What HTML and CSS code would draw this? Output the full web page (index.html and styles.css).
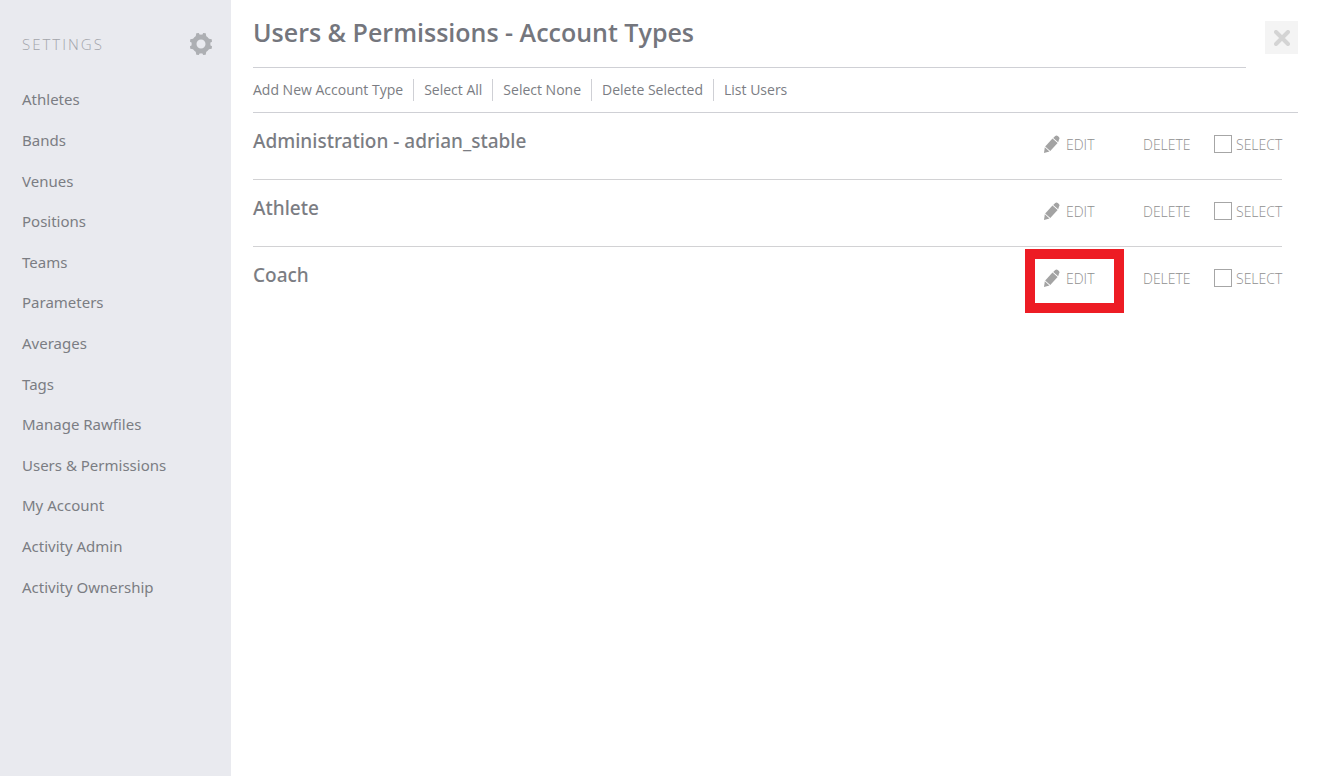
FILE: index.html
```html
<!DOCTYPE html>
<html lang="en">

<head>
    <meta charset="UTF-8">
    <meta name="viewport" content="width=device-width, initial-scale=1.0">
    <title>Users &amp; Permissions - Account Types</title>
    <link rel="stylesheet" href="styles.css">
</head>

<body>
    <!-- Icon used by every edit link -->
    <svg class="sprite" aria-hidden="true">
        <symbol id="pencil" viewBox="0 0 16 18">
            <path d="M1.2 11.600 8.500 3.400 13.600 7.900 6.300 16z" />
            <path d="M9.200 2.900 11.200 1c.8-.8 1.800-.8 2.600-.1l1.100 1c.8.8.8 1.800.1 2.600L14.200 7.200z" />
            <path d="M.8 12.300 0 17.900 5.500 16.600z" />
        </symbol>
    </svg>

    <aside class="sidebar">
        <div class="sidebar-header">
            <h2>SETTINGS</h2>
            <svg class="gear" viewBox="0 0 24 24" aria-hidden="true">
                <circle cx="12" cy="12" r="7" />
                <path d="M6.500 5.500 7.300 1.300 9.800 1 11 3.200H13L14.200 1 16.700 1.300 17.500 5.500z" />
                <path d="M6.500 5.500 7.300 1.300 9.800 1 11 3.200H13L14.200 1 16.700 1.300 17.500 5.500z" transform="rotate(90 12 12)" />
                <path d="M6.500 5.500 7.300 1.300 9.800 1 11 3.200H13L14.200 1 16.700 1.300 17.500 5.500z" transform="rotate(180 12 12)" />
                <path d="M6.500 5.500 7.300 1.300 9.800 1 11 3.200H13L14.200 1 16.700 1.300 17.500 5.500z" transform="rotate(270 12 12)" />
            </svg>
        </div>
        <nav>
            <ul class="menu">
                <li><a href="#">Athletes</a></li>
                <li><a href="#">Bands</a></li>
                <li><a href="#">Venues</a></li>
                <li><a href="#">Positions</a></li>
                <li><a href="#">Teams</a></li>
                <li><a href="#">Parameters</a></li>
                <li><a href="#">Averages</a></li>
                <li><a href="#">Tags</a></li>
                <li><a href="#">Manage Rawfiles</a></li>
                <li><a href="#">Users &amp; Permissions</a></li>
                <li><a href="#">My Account</a></li>
                <li><a href="#">Activity Admin</a></li>
                <li><a href="#">Activity Ownership</a></li>
            </ul>
        </nav>
    </aside>

    <main>
        <header class="page-header">
            <h1>Users &amp; Permissions - Account Types</h1>
            <button type="button" class="close" aria-label="Close">
                <svg viewBox="0 0 16 16" aria-hidden="true"><path d="M2 2l12 12M14 2 2 14" /></svg>
            </button>
        </header>

        <div class="toolbar">
            <a href="#">Add New Account Type</a>
            <a href="#">Select All</a>
            <a href="#">Select None</a>
            <a href="#">Delete Selected</a>
            <a href="#">List Users</a>
        </div>

        <ul class="accounts">
            <li>
                <h3>Administration - adrian_stable</h3>
                <div class="actions">
                    <a href="#" class="edit"><svg><use href="#pencil" /></svg>EDIT</a>
                    <a href="#">DELETE</a>
                    <label><input type="checkbox">SELECT</label>
                </div>
            </li>
            <li>
                <h3>Athlete</h3>
                <div class="actions">
                    <a href="#" class="edit"><svg><use href="#pencil" /></svg>EDIT</a>
                    <a href="#">DELETE</a>
                    <label><input type="checkbox">SELECT</label>
                </div>
            </li>
            <li>
                <h3>Coach</h3>
                <div class="actions">
                    <a href="#" class="edit highlight"><svg><use href="#pencil" /></svg>EDIT</a>
                    <a href="#">DELETE</a>
                    <label><input type="checkbox">SELECT</label>
                </div>
            </li>
        </ul>
    </main>
</body>

</html>
```
FILE: styles.css
```css
*,
*::after {
    box-sizing: border-box;
    margin: 0;
    padding: 0;
}

body {
    display: flex;
    min-height: 100vh;
    font-family: "Segoe UI", "Noto Sans", sans-serif;
    font-size: 15px;
    color: #7b7d83;
    background-color: #fff;
}

a {
    color: inherit;
    text-decoration: none;
}

ul {
    list-style: none;
}

.sprite {
    position: absolute;
    width: 0;
    height: 0;
}

/* Sidebar */
.sidebar {
    flex: 0 0 231px;
    padding: 32px 18px 0 22px;
    background-color: #e9eaef;
}

.sidebar-header {
    display: flex;
    justify-content: space-between;
    align-items: center;
    height: 24px;
    margin-bottom: 23px;
}

.sidebar-header h2 {
    font-family: "Segoe UI", "Open Sans", sans-serif;
    font-size: 15px;
    font-weight: 300;
    letter-spacing: 2px;
    color: #a3a5ab;
}

.gear {
    width: 24px;
    height: 24px;
}

.gear circle {
    fill: none;
    stroke: #adafb3;
    stroke-width: 5;
}

.gear path {
    fill: #adafb3;
}

.menu {
    display: grid;
    grid-auto-rows: 1fr;
    align-items: center;
    min-height: 528px;
}

/* Content */
main {
    flex: 1;
    padding: 0 22px;
}

.page-header {
    display: flex;
    align-items: flex-start;
    gap: 19px;
    height: 68px;
}

h1 {
    flex: 1;
    height: 68px;
    border-bottom: 1px solid #cfd0d5;
    font-family: "Trebuchet MS", "Open Sans", sans-serif;
    font-size: 25px;
    font-weight: 600;
    line-height: 64px;
    color: #74767d;
}

.close {
    width: 33px;
    height: 33px;
    margin-top: 21px;
    border: none;
    background-color: #f4f4f4;
    cursor: pointer;
}

.close svg {
    display: block;
    width: 16px;
    height: 16px;
    margin: auto;
}

.close path {
    stroke: #d4d4d4;
    stroke-width: 4;
    stroke-linecap: round;
}

.toolbar {
    display: flex;
    padding: 11px 0;
    border-bottom: 1px solid #cfd0d5;
    font-family: "Segoe UI", "Open Sans", sans-serif;
    font-size: 14px;
    line-height: 22px;
}

.toolbar a + a {
    margin-left: 10px;
    padding-left: 10px;
    border-left: 1px solid #cfd0d5;
}

/* Account list */
.accounts {
    padding-right: 16px;
}

.accounts li {
    display: flex;
    justify-content: space-between;
    height: 67px;
    padding-top: 16px;
}

.accounts li:not(:last-child) {
    border-bottom: 1px solid #d2d2d4;
}

.accounts h3 {
    font-family: "Trebuchet MS", "Noto Sans", sans-serif;
    font-size: 19px;
    font-weight: 500;
    line-height: 24px;
}

.actions {
    display: grid;
    grid-template-columns: 99px 71px 68px;
    align-items: center;
    height: 30px;
    font-family: "Segoe UI", "Open Sans", sans-serif;
    font-size: 14px;
    font-weight: 300;
    color: #8f8f8f;
}

.edit {
    position: relative;
    display: flex;
    align-items: center;
    gap: 6px;
}

.edit svg {
    width: 16px;
    height: 18px;
    fill: #a3a3a3;
}

/* Frame drawn around a link to call it out */
.highlight::after {
    content: "";
    position: absolute;
    top: -20px;
    left: -19px;
    width: 99px;
    height: 64px;
    border: 10px solid #ed1c24;
}

.actions label {
    display: flex;
    align-items: center;
    gap: 4px;
}

.actions input {
    appearance: none;
    flex: none;
    width: 18px;
    height: 18px;
    border: 1px solid #a6a6a6;
    background-color: #fff;
}

.actions input:checked {
    background-color: #a6a6a6;
}
```
